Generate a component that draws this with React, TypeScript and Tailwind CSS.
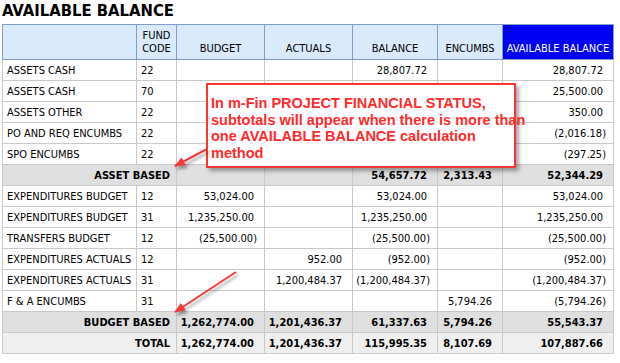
import React from 'react';

type Row = {
    label: string;
    fund?: string;
    budget?: string;
    actuals?: string;
    balance?: string;
    encumbs?: string;
    avail?: string;
    kind?: 'sub' | 'total';
};

// cells that sit under the callout are left blank
const rows: Row[] = [
    { label: 'ASSETS CASH', fund: '22', balance: '28,807.72', avail: '28,807.72' },
    { label: 'ASSETS CASH', fund: '70', avail: '25,500.00' },
    { label: 'ASSETS OTHER', fund: '22', avail: '350.00' },
    { label: 'PO AND REQ ENCUMBS', fund: '22', avail: '(2,016.18)' },
    { label: 'SPO ENCUMBS', fund: '22', avail: '(297.25)' },
    { label: 'ASSET BASED', balance: '54,657.72', encumbs: '2,313.43', avail: '52,344.29', kind: 'sub' },
    { label: 'EXPENDITURES BUDGET', fund: '12', budget: '53,024.00', balance: '53,024.00', avail: '53,024.00' },
    { label: 'EXPENDITURES BUDGET', fund: '31', budget: '1,235,250.00', balance: '1,235,250.00', avail: '1,235,250.00' },
    { label: 'TRANSFERS BUDGET', fund: '12', budget: '(25,500.00)', balance: '(25,500.00)', avail: '(25,500.00)' },
    { label: 'EXPENDITURES ACTUALS', fund: '12', actuals: '952.00', balance: '(952.00)', avail: '(952.00)' },
    { label: 'EXPENDITURES ACTUALS', fund: '31', actuals: '1,200,484.37', balance: '(1,200,484.37)', avail: '(1,200,484.37)' },
    { label: 'F & A ENCUMBS', fund: '31', encumbs: '5,794.26', avail: '(5,794.26)' },
    { label: 'BUDGET BASED', budget: '1,262,774.00', actuals: '1,201,436.37', balance: '61,337.63', encumbs: '5,794.26', avail: '55,543.37', kind: 'sub' },
    { label: 'TOTAL', budget: '1,262,774.00', actuals: '1,201,436.37', balance: '115,995.35', encumbs: '8,107.69', avail: '107,887.66', kind: 'total' },
];

const cell = 'h-[21px] p-0 border border-[#c9c9c9] align-middle whitespace-nowrap';
const head = 'p-0 pb-[4px] border border-[#7f9ec9] align-bottom text-center font-normal leading-[13px]';

const Num = ({ v }: { v?: string }) => {
    if (!v) return <td className={cell}></td>;
    const neg = v.startsWith('(');
    return <td className={`${cell} text-right ${neg ? 'pr-[7px]' : 'pr-[10px]'}`}>{v}</td>;
};

export default function App() {
    return (
        <div className="relative w-[620px] h-[363px] overflow-hidden bg-white text-black font-['DejaVu_Sans_Condensed','DejaVu_Sans','Liberation_Sans',sans-serif]">
            <div className="h-[24px] pl-[2px] pt-[1px] text-[16.5px] font-bold leading-[20px]">AVAILABLE BALANCE</div>
            <table className="ml-[2px] w-[611px] table-fixed border-collapse text-[11px] leading-none">
                <colgroup>
                    <col className="w-[134px]" />
                    <col className="w-[40px]" />
                    <col className="w-[88px]" />
                    <col className="w-[88px]" />
                    <col className="w-[85px]" />
                    <col className="w-[65px]" />
                    <col className="w-[111px]" />
                </colgroup>
                <thead>
                    <tr className="h-[35px] bg-[#d8eafb]">
                        <th className={head}></th>
                        <th className={head}>FUND<br />CODE</th>
                        <th className={head}>BUDGET</th>
                        <th className={head}>ACTUALS</th>
                        <th className={head}>BALANCE</th>
                        <th className={head}>ENCUMBS</th>
                        <th className={`${head} bg-[#0000f2] text-white`}>AVAILABLE BALANCE</th>
                    </tr>
                </thead>
                <tbody>
                    {rows.map((r, i) => (
                        <tr
                            key={i}
                            className={r.kind === 'sub' ? 'bg-[#dfdfdf] font-bold' : r.kind === 'total' ? 'bg-[#efefef] font-bold' : ''}
                        >
                            {r.kind ? (
                                <td colSpan={2} className={`${cell} text-right pr-[6px]`}>{r.label}</td>
                            ) : (
                                <>
                                    <td className={`${cell} pl-[4px]`}>{r.label}</td>
                                    <td className={`${cell} pl-[4px]`}>{r.fund}</td>
                                </>
                            )}
                            <Num v={r.budget} />
                            <Num v={r.actuals} />
                            <Num v={r.balance} />
                            <Num v={r.encumbs} />
                            <Num v={r.avail} />
                        </tr>
                    ))}
                </tbody>
            </table>

            {/* callout note */}
            <div className="absolute left-[206px] top-[83px] w-[310px] h-[85px] border-2 border-[#ff3535] bg-white pl-[3px] pt-[10px] shadow-[3px_3px_4px_rgba(0,0,0,0.35)] font-['Liberation_Sans',Arial,sans-serif] text-[14.5px] font-bold leading-[16.7px] text-[#ff2a2a] whitespace-nowrap">
                In m-Fin PROJECT FINANCIAL STATUS,<br />
                subtotals will appear when there is more than<br />
                one AVAILABLE BALANCE calculation<br />
                method
            </div>

            <svg className="absolute left-0 top-0 pointer-events-none" width="620" height="363">
                <defs>
                    <marker id="head" markerUnits="userSpaceOnUse" markerWidth="11" markerHeight="9" refX="10" refY="4.5" orient="auto">
                        <path d="M0,0 L11,4.5 L0,9 z" fill="#f23a3a" />
                    </marker>
                    <filter id="sh" x="-20%" y="-20%" width="160%" height="160%">
                        <feDropShadow dx="2" dy="3" stdDeviation="1.5" floodColor="#000" floodOpacity="0.35" />
                    </filter>
                </defs>
                <g filter="url(#sh)" stroke="#f23a3a" strokeWidth="2" fill="none">
                    <line x1="207" y1="149" x2="175" y2="166" markerEnd="url(#head)" />
                    <line x1="236" y1="272" x2="175" y2="312" markerEnd="url(#head)" />
                </g>
            </svg>
        </div>
    );
}
